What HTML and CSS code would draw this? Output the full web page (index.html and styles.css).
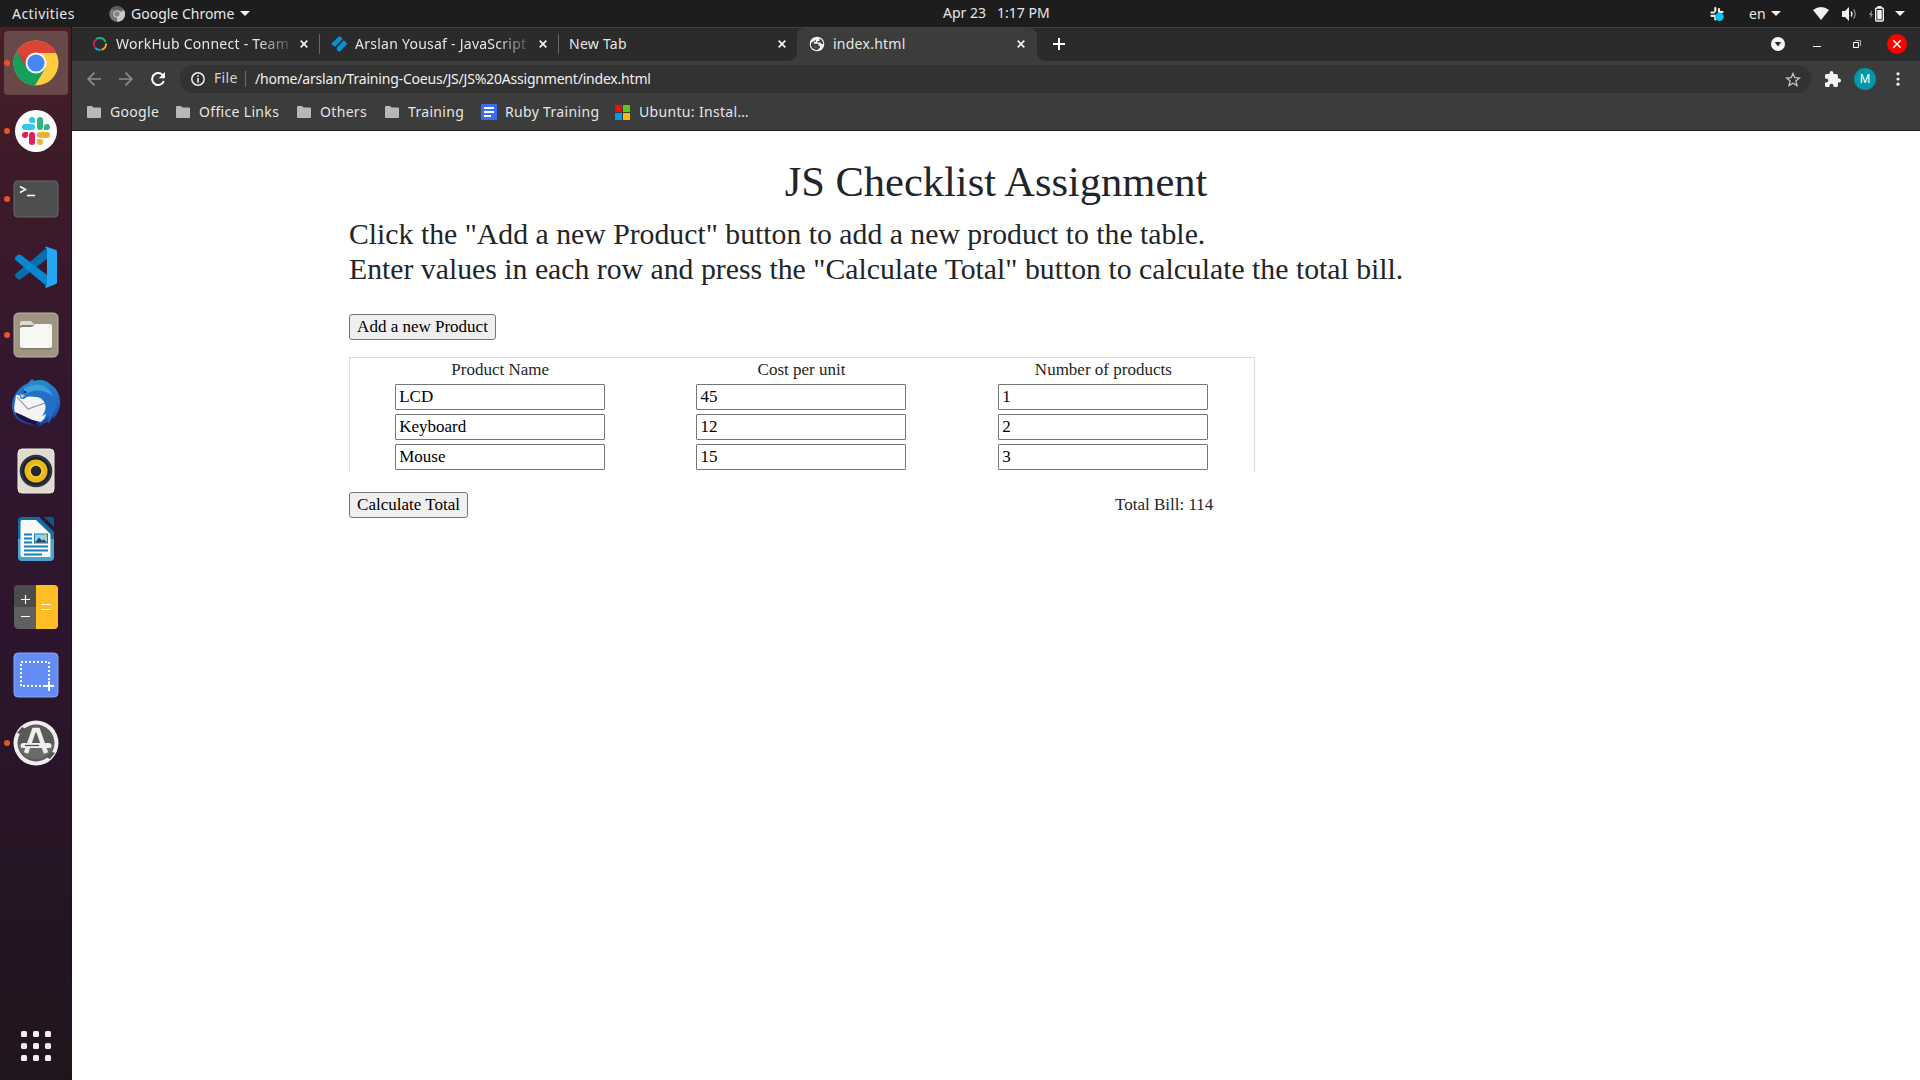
FILE: index.html
```html
<!DOCTYPE html>
<html lang="en">
<head>
<meta charset="utf-8">
<title>index.html</title>
<link rel="stylesheet" href="styles.css">
</head>
<body>
<header class="topbar">
  <span class="activities">Activities</span>
  <svg class="app-icon" width="16" height="16" viewBox="0 0 16 16"><circle cx="8" cy="8" r="7.7" fill="#777"/><path d="M8 8L15 4A7.7 7.7 0 0 1 8 15.7Z" fill="#c8c8c8"/><path d="M8 4H15A8 8 0 0 0 2 3Z" fill="#5d5d5d"/><circle cx="8" cy="8" r="3.6" fill="#ddd"/><circle cx="8" cy="8" r="2.7" fill="#858585"/></svg>
  <span class="app-name">Google Chrome</span>
  <i class="caret"></i>
  <div class="clock"><span>Apr 23</span><span>1:17 PM</span></div>
  <div class="tray">
    <svg class="tray-slack" width="16" height="16" viewBox="0 0 16 16"><g stroke="#eee" stroke-width="2.2" stroke-linecap="round"><path d="M6.300 2v3M10 3v3M2.500 6.500H5M10.500 6H13.500M2.500 9.800H6M6.300 10v3.500"/></g><circle cx="10.500" cy="10.700" r="4.300" fill="#00c8f0"/></svg>
    <span class="lang">en</span>
    <i class="caret caret-lang"></i>
    <svg class="wifi" width="16" height="13" viewBox="0 0 16 13"><path d="M0 3Q8-3 16 3L8 13Z" fill="#f2f2f2"/></svg>
    <svg class="volume" width="15" height="14" viewBox="0 0 15 14"><path d="M0 4h3l4-4v14l-4-4H0Z" fill="#f2f2f2"/><path d="M9 4.500q2 2.500 0 5" fill="none" stroke="#eee" stroke-width="1.300"/><path d="M11.500 2.500q3.500 4.500 0 9" fill="none" stroke="#888" stroke-width="1.300"/></svg>
    <svg class="battery" width="16" height="16" viewBox="0 0 16 16"><path d="M3 4L0 9h2l-1 4 3-5H2.500Z" fill="#999"/><path d="M8.500 0h4v2h-4z" fill="#f2f2f2"/><rect x="6.700" y="2" width="7.600" height="13" rx="1" fill="none" stroke="#f2f2f2" stroke-width="1.400"/><path d="M8.300 4h4.400v9.400H8.300z" fill="#f2f2f2"/></svg>
    <i class="caret caret-sys"></i>
  </div>
</header>
<div class="desktop">
  <nav class="dock">
    <div class="launcher active running"><svg width="46" height="46" viewBox="0 0 46 46"><circle cx="23" cy="23" r="22.500" fill="#ffce40"/><path d="M23 23L3.500 11.800A22.500 22.500 0 0 0 22 45.500L32.500 28Z" fill="#149f5b"/><path d="M23 13H43.200A22.500 22.500 0 0 0 3.800 11.300L13.500 28Z" fill="#dc4437"/><path d="M4.500 13l9 15v-9z" fill="#b93a30" opacity=".5"/><circle cx="23" cy="23" r="10.500" fill="#f3f3f3"/><circle cx="23" cy="23" r="8.600" fill="#4587f5"/></svg></div>
    <div class="launcher running"><svg width="42" height="42" viewBox="0 0 42 42"><circle cx="21" cy="21" r="21" fill="#fff"/><g fill="#36c5f0"><rect x="7" y="14" width="13" height="6" rx="3"/><path d="M20 13h-3a3 3 0 1 1 3-3z"/></g><g fill="#2eb67d"><rect x="22" y="7" width="6" height="13" rx="3"/><path d="M29 20v-3a3 3 0 1 1 3 3z"/></g><g fill="#ecb22e"><rect x="22" y="22" width="13" height="6" rx="3"/><path d="M22 29h3a3 3 0 1 1-3 3z"/></g><g fill="#e01e5a"><rect x="14" y="22" width="6" height="13" rx="3"/><path d="M13 22v3a3 3 0 1 1-3-3z"/></g></svg></div>
    <div class="launcher running"><svg width="46" height="38" viewBox="0 0 46 38"><rect x="1" y="1" width="44" height="36" rx="3.500" fill="#4e4e4e" stroke="#6a6a6a"/><path d="M7 6.500l5.500 3L7 12.500" fill="none" stroke="#fff" stroke-width="1.600"/><path d="M14 15.500h8" stroke="#fff" stroke-width="1.600"/></svg></div>
    <div class="launcher"><svg width="44" height="44" viewBox="0 0 44 44"><path d="M1.500 29Q0 30.500 1.500 32L4 34.200Q5.500 35 7 34L33 14V2.500Z" fill="#0a6cb0"/><path d="M1.500 15Q0 13.500 1.500 12L4 9.800Q5.500 9 7 10L33 30V41.500Z" fill="#0688d2"/><path d="M32 1.500L42 5q1 .5 1 2V37q0 1.500-1 2L32 43 31 41.500 33 40V4L31 2.500Z" fill="#27a4f2"/></svg></div>
    <div class="launcher running"><svg width="46" height="46" viewBox="0 0 46 46"><rect x="1" y="1" width="44" height="44" rx="4.500" fill="#9d9581" stroke="#bcb6a7"/><path d="M7 36V11q0-2 2-2h9l4 4h14q3 0 3 3z" fill="#dedacc"/><rect x="7" y="13" width="32" height="24.500" rx="2" fill="#837b69"/><path d="M7 17q0-2 2-2h9q2 0 4-3h15q2 0 2 2v20q0 2-2 2H9q-2 0-2-2z" fill="#f7f7f5"/></svg></div>
    <div class="launcher"><svg width="50" height="50" viewBox="0 0 50 50"><defs><linearGradient id="bird" x1="0" y1="0" x2="0" y2="1"><stop offset="0" stop-color="#248dcf"/><stop offset=".5" stop-color="#2366c5"/><stop offset="1" stop-color="#1a3f9a"/></linearGradient></defs><path d="M17 5l4-4 2 2Q33 0 39 6q11 7 10 20-1 9-6 14l-1-1-4 7-2-2-9 5 2-4-6 2Q8 46 3 37-1 29 2 21 6 10 17 5Z" fill="url(#bird)"/><path d="M3 30L5 17l30 3 1 18-6 6Q15 41 4 35Z" fill="#f3f4f5"/><path d="M6 19l11 12 17-6" fill="none" stroke="#8e959c" stroke-width="1.100"/><path d="M4 34l9 4 8 4 6 2-3 3-9-3Q6 41 4 34Z" fill="#211144"/><path d="M10 21Q7 17 11 11q6-6 15-3 12-2 18 10 4 12-5 23l-2 3 1-6-5 4 2-6-4 2q5-7 3-12-3-8-12-8-7 0-9 3z" fill="#2370c6"/><path d="M13 10q12-6 20-2 6 3 9 10-11-7-20-5l-9 3z" fill="#3c9fda"/><path d="M9 16l5 1-3 4z" fill="#bcc5cb"/><circle cx="14" cy="14" r="1.300" fill="#102764"/></svg></div>
    <div class="launcher"><svg width="38" height="46" viewBox="0 0 38 46"><rect x="1" y="1" width="36" height="44" rx="4" fill="#dfdccf" stroke="#eeece4"/><circle cx="19" cy="23" r="16.300" fill="#30343c"/><circle cx="19" cy="23" r="13.800" fill="#192031"/><circle cx="19" cy="23" r="11.500" fill="#ebb915"/><circle cx="19" cy="23" r="7" fill="#f6cb35"/><circle cx="19" cy="23" r="5.200" fill="#24272a"/></svg></div>
    <div class="launcher"><svg width="38" height="46" viewBox="0 0 38 46"><path d="M5 1H22L37 16V40q0 5-5 5H5q-4 0-4-4V5q0-4 4-4Z" fill="#0b70a7"/><path d="M1 23H37V41q0 4-4 4H5q-4 0-4-4z" fill="#4aa3cf"/><path d="M27 1h8q2 0 2 2v8z" fill="#075b8e"/><path d="M5 4H19L33.500 18V41H5Q3.500 41 3.500 39V6Q3.500 4 5 4Z" fill="#fafafa"/><path d="M7 18.500h8M7 22.500h8M7 26.500h8M7 30.500h24M7 34.500h24M7 38.500h18" stroke="#137eb5" stroke-width="2"/><rect x="17" y="17.500" width="14" height="10" fill="#137eb5"/><rect x="18" y="18.500" width="12" height="8" fill="#8ed4f2"/><path d="M18 26.500l4-5 3 3 2-1 3 3z" fill="#3b4147"/><path d="M27 18.500h3v3z" fill="#f6b52c"/></svg></div>
    <div class="launcher"><svg width="46" height="46" viewBox="0 0 46 46"><rect x="1" y="1" width="44" height="44" rx="4.500" fill="#606060"/><path d="M5 1h18v22H1V5q0-4 4-4z" fill="#4c4c4c"/><path d="M23 1h18q4 0 4 4v36q0 4-4 4H23z" fill="#ffbd25"/><path d="M8 15.500h9M12.500 11v9M8 32.500h9M28 20.500h10M28 25.500h10" stroke="#fff" stroke-width="1.100"/></svg></div>
    <div class="launcher"><svg width="46" height="46" viewBox="0 0 46 46"><rect x="1" y="1" width="44" height="44" rx="4" fill="#648cf5" stroke="#85a5f8"/><rect x="8" y="10" width="28" height="24" fill="none" stroke="#fff" stroke-width="2" stroke-dasharray="2 2"/><path d="M31 34h10M36 29v10" stroke="#fff" stroke-width="2"/></svg></div>
    <div class="launcher running"><svg width="46" height="46" viewBox="0 0 46 46"><circle cx="23" cy="23" r="22.500" fill="#eee"/><circle cx="23" cy="23" r="18.500" fill="#5a5a5a"/><path d="M5 25h36a18.500 18.500 0 0 1-36 0z" fill="#6b6b6b"/><path d="M4 13l5-6 4 2-6 5zM42 33l-5 6-4-2 6-5z" fill="#555"/><path d="M13 33L21 10h4l8 23" fill="none" stroke="#eee" stroke-width="4.500"/><path d="M10 25.500h26" stroke="#eee" stroke-width="5" stroke-linecap="round"/><path d="M12 25.500h14" stroke="#7a2c6b" stroke-width="1.200"/></svg></div>
    <div class="apps"><i></i><i></i><i></i><i></i><i></i><i></i><i></i><i></i><i></i></div>
  </nav>
  <main class="browser">
    <div class="tabstrip">
      <div class="tab"><svg class="favicon" width="16" height="16" viewBox="0 0 16 16"><g fill="none" stroke-width="2"><path d="M4 3.200A6 6 0 0 1 8 2" stroke="#19b37b"/><path d="M8 2a6 6 0 0 1 5.500 4" stroke="#18b184"/><path d="M14 7.500A6 6 0 0 1 9.500 13.800" stroke="#efad26"/><path d="M8.500 14A6 6 0 0 1 3 11.500" stroke="#1eaed8"/><path d="M2.500 10.500A6 6 0 0 1 4 3.500" stroke="#d51c5a"/></g></svg><span class="tab-title fade">WorkHub Connect - Team</span><svg class="close" viewBox="0 0 8 8"><path d="M.7.7l6.600 6.600M7.300.7L.7 7.300"/></svg></div>
      <div class="tab"><svg class="favicon" width="16" height="16" viewBox="0 0 16 16"><g fill="#0a91d6"><path d="M8 .500Q9.500 0 10.500 1.500L11.500 3 4.500 10.500Q2 10.500 .300 7.500Z"/><path d="M12.500 4.500Q15 5 16 8L9 15.500Q6.500 16 5.500 12Z"/></g></svg><span class="tab-title fade">Arslan Yousaf - JavaScript</span><svg class="close" viewBox="0 0 8 8"><path d="M.7.7l6.600 6.600M7.300.7L.7 7.300"/></svg></div>
      <div class="tab plain"><span class="tab-title">New Tab</span><svg class="close" viewBox="0 0 8 8"><path d="M.7.7l6.600 6.600M7.300.7L.7 7.300"/></svg></div>
      <div class="tab current"><svg class="favicon" width="16" height="16" viewBox="0 0 16 16"><circle cx="8" cy="8" r="7.300" fill="#f5f5f5"/><path d="M10 2.300L7 4v1.800H5v2h4.500V10H11v1.500L8.500 14H7.800V12L5.800 10V9L2.200 6.800 1.800 9Q2.500 13 7 14l.8-.3V12.300L5.800 10.500V9.300L2.500 6.500M10.500 3v2h-2v1.500h3L13 8h1.300Q14 4 10.500 2.500" fill="#3c3c3c"/></svg><span class="tab-title">index.html</span><svg class="close" viewBox="0 0 8 8"><path d="M.7.7l6.600 6.600M7.300.7L.7 7.300"/></svg></div>
      <svg class="newtab" width="12" height="12" viewBox="0 0 12 12"><path d="M6 0v12M0 6h12" stroke="#fff" stroke-width="2"/></svg>
      <div class="window-controls">
        <svg width="14" height="14" viewBox="0 0 14 14"><circle cx="7" cy="7" r="7" fill="#f8f8f8"/><path d="M3.700 5h6.600L7 9.500z" fill="#2b2b2b"/></svg>
        <svg width="8" height="8" viewBox="0 0 8 8"><path d="M0 6.500h8" stroke="#fff"/></svg>
        <svg width="8" height="8" viewBox="0 0 8 8"><path d="M.5 2.500h5v5h-5z" fill="none" stroke="#fff"/><path d="M2.500 .5h5V6" fill="none" stroke="#aaa"/></svg>
        <svg width="20" height="20" viewBox="0 0 20 20"><circle cx="10" cy="10" r="10" fill="#f90400"/><path d="M6.300 6.300l7.400 7.400M13.700 6.300l-7.400 7.400" stroke="#fff" stroke-width="1.500"/></svg>
      </div>
    </div>
    <div class="toolbar">
      <svg class="nav-icon" width="14" height="14" viewBox="0 0 14 14"><path d="M14 7H1.500M7.500 .7L1.200 7l6.300 6.300" fill="none" stroke="#8d8d8d" stroke-width="1.700"/></svg>
      <svg class="nav-icon" width="14" height="14" viewBox="0 0 14 14"><path d="M0 7h12.500M6.500 .7L12.800 7l-6.300 6.300" fill="none" stroke="#8d8d8d" stroke-width="1.700"/></svg>
      <svg class="nav-icon" width="14" height="14" viewBox="0 0 14 14"><path d="M12 3.500A6 6 0 1 0 12.800 9" fill="none" stroke="#fff" stroke-width="2"/><path d="M14 0v6.200H7.800Z" fill="#fff"/></svg>
      <div class="omnibox">
        <svg width="14" height="14" viewBox="0 0 14 14"><circle cx="7" cy="7" r="6.200" fill="none" stroke="#eee" stroke-width="1.500"/><path d="M6.200 3.200h1.600v1.600H6.200zM6.200 6h1.600v4.800H6.200z" fill="#eee"/></svg>
        <span class="scheme">File</span><span class="url">/home/arslan/Training-Coeus/JS/JS%20Assignment/index.html</span>
        <svg class="star" width="16" height="15" viewBox="0 0 16 15"><path d="M8 1.500l1.800 4.200 4.600.4-3.500 3 1.100 4.500L8 11.200l-4 2.400 1.100-4.500-3.500-3 4.600-.4z" fill="none" stroke="#c4c4c4" stroke-width="1.300"/></svg>
      </div>
      <svg class="puzzle" width="16" height="16" viewBox="2 1 21 21"><path d="M20.500 11H19V7a2 2 0 0 0-2-2h-4V3.500a2.500 2.500 0 0 0-5 0V5H4a2 2 0 0 0-2 2v3.800h1.500a2.700 2.700 0 0 1 0 5.400H2V20a2 2 0 0 0 2 2h3.800v-1.500a2.700 2.700 0 0 1 5.400 0V22H17a2 2 0 0 0 2-2v-4h1.500a2.500 2.500 0 0 0 0-5Z" fill="#f3f3f3"/></svg>
      <span class="avatar">M</span>
      <svg class="menu" width="4" height="14" viewBox="0 0 4 14"><g fill="#eee"><circle cx="2" cy="1.800" r="1.600"/><circle cx="2" cy="7" r="1.600"/><circle cx="2" cy="12.200" r="1.600"/></g></svg>
    </div>
    <div class="bookmarks">
      <div class="bookmark b1"><svg width="14" height="12" viewBox="0 0 14 12"><path d="M0 1q0-1 1-1h4l1.500 1.500H13q1 0 1 1V11q0 1-1 1H1q-1 0-1-1z"/></svg><span>Google</span></div>
      <div class="bookmark b2"><svg width="14" height="12" viewBox="0 0 14 12"><path d="M0 1q0-1 1-1h4l1.500 1.500H13q1 0 1 1V11q0 1-1 1H1q-1 0-1-1z"/></svg><span>Office Links</span></div>
      <div class="bookmark b3"><svg width="14" height="12" viewBox="0 0 14 12"><path d="M0 1q0-1 1-1h4l1.500 1.500H13q1 0 1 1V11q0 1-1 1H1q-1 0-1-1z"/></svg><span>Others</span></div>
      <div class="bookmark b4"><svg width="14" height="12" viewBox="0 0 14 12"><path d="M0 1q0-1 1-1h4l1.500 1.500H13q1 0 1 1V11q0 1-1 1H1q-1 0-1-1z"/></svg><span>Training</span></div>
      <div class="bookmark b5"><svg width="16" height="16" viewBox="0 0 16 16"><rect width="16" height="16" rx="1" fill="#3d6bf5"/><path d="M3 4h10M3 8h10M3 12h7" stroke="#fff" stroke-width="1.800"/></svg><span>Ruby Training</span></div>
      <div class="bookmark b6"><svg width="15" height="15" viewBox="0 0 15 15"><path d="M0 0h7v7H0z" fill="#f80b00"/><path d="M8 0h7v7H8z" fill="#55cc1a"/><path d="M0 8h7v7H0z" fill="#0099f8"/><path d="M8 8h7v7H8z" fill="#ffba00"/></svg><span>Ubuntu: Instal…</span></div>
    </div>
    <section class="page">
      <h1>JS Checklist Assignment</h1>
      <div class="content">
        <h3>Click the "Add a new Product" button to add a new product to the table.<br>Enter values in each row and press the "Calculate Total" button to calculate the total bill.</h3>
        <button class="add">Add a new Product</button>
        <table class="products">
          <tr><td>Product Name</td><td>Cost per unit</td><td>Number of products</td></tr>
          <tr><td><input value="LCD"></td><td><input value="45"></td><td><input value="1"></td></tr>
          <tr><td><input value="Keyboard"></td><td><input value="12"></td><td><input value="2"></td></tr>
          <tr><td><input value="Mouse"></td><td><input value="15"></td><td><input value="3"></td></tr>
        </table>
        <div class="summary"><button class="calc">Calculate Total</button><span>Total Bill: 114</span></div>
      </div>
    </section>
  </main>
</div>
</body>
</html>
```
FILE: styles.css
```css
* { box-sizing: border-box; }
body { margin: 0; width: 1920px; height: 1080px; overflow: hidden; display: flex; flex-direction: column; font-family: "Noto Sans", sans-serif; font-size: 14px; white-space: nowrap; }
svg { display: block; flex: none; }

.topbar { position: relative; height: 27px; flex: none; display: flex; align-items: center; padding-left: 12px; background: #1d1d1d; color: #e8e8e8; }
.activities { width: 97px; letter-spacing: .45px; }
.app-name { margin-left: 6px; width: 104px; }
.caret { border: 5px solid transparent; border-top-color: #f2f2f2; border-bottom: 0; margin-left: 5px; }
.clock { position: absolute; left: 943px; top: 3px; display: flex; gap: 11px; }
.tray { margin-left: auto; padding-right: 15px; display: flex; align-items: center; }
.lang { margin-left: 24px; width: 17px; }
.wifi { margin-left: 32px; }
.volume { margin-left: 13px; }
.battery { margin-left: 12px; }
.caret-sys { margin-left: 10px; }

.desktop { flex: 1; display: flex; min-height: 0; }
.dock { width: 72px; flex: none; padding-top: 4px; display: flex; flex-direction: column; align-items: center; gap: 4px; background: linear-gradient(#482025 0, #3e1b29 12%, #32172f 36%, #2a152b 66%, #21151d 100%); box-shadow: inset -1px 0 #1c1518; }
.launcher { position: relative; width: 64px; height: 64px; flex: none; display: flex; align-items: center; justify-content: center; border-radius: 4px; }
.active { background: #684849; }
.running::before { content: ""; position: absolute; left: 0; top: 29px; width: 6px; height: 6px; border-radius: 50%; background: #e95420; }
.apps { margin: auto 0 19px; display: grid; grid-template-columns: repeat(3, 6px); gap: 6px; }
.apps i { height: 6px; border-radius: 1.5px; background: #f2eff1; }

.browser { flex: 1; min-width: 0; display: flex; flex-direction: column; background: #fff; }
.tabstrip { height: 34px; flex: none; display: flex; align-items: center; background: #2b2b2b; border-top: 1px solid #424242; padding-left: 8px; color: #e6e6e6; }
.tab { position: relative; width: 239px; height: 33px; flex: none; display: flex; align-items: center; padding: 0 11px 1px 12px; }
.tab + .tab:not(.current)::before { content: ""; position: absolute; left: 0; top: 6px; width: 1px; height: 20px; background: #676767; }
.plain { padding-left: 11px; }
.tab-title { flex: 1; margin-left: 8px; overflow: hidden; letter-spacing: .25px; line-height: 20px; padding-bottom: 1px; }
.plain .tab-title { margin-left: 0; }
.fade { margin-right: 8px; -webkit-mask-image: linear-gradient(90deg, #000 142px, rgba(0,0,0,.1) 176px); mask-image: linear-gradient(90deg, #000 142px, rgba(0,0,0,.1) 176px); }
.close { width: 8px; height: 8px; fill: none; stroke: #f2f2f2; stroke-width: 1.7; }
.current { background: #3c3c3c; border-radius: 8px 8px 0 0; width: 240px; padding-right: 12px; }
.current::before, .current::after { content: ""; position: absolute; bottom: 0; width: 8px; height: 8px; }
.current::before { left: -8px; background: radial-gradient(circle at 0 0, transparent 7.5px, #3c3c3c 8px); }
.current::after { right: -8px; background: radial-gradient(circle at 100% 0, transparent 7.5px, #3c3c3c 8px); }
.newtab { margin: 0 0 1px 16px; }
.window-controls { margin-left: auto; padding: 0 13px 1px 0; display: flex; align-items: center; }
.window-controls svg:nth-child(2) { margin-left: 28px; }
.window-controls svg:nth-child(3) { margin-left: 32px; }
.window-controls svg:nth-child(4) { margin-left: 26px; }

.toolbar { height: 36px; flex: none; display: flex; align-items: center; padding: 0 20px 0 15px; background: #3c3c3c; }
.nav-icon { margin-right: 18px; }
.omnibox { height: 28px; width: 1632px; margin-left: -3px; border-radius: 14px; background: #323232; display: flex; align-items: center; padding: 0 10px 0 11px; color: #f0f0f0; }
.scheme { margin-left: 9px; width: 32px; height: 16px; line-height: 14px; border-right: 1px solid #6c6c6c; color: #d5d5d5; letter-spacing: .3px; }
.url { margin-left: 9px; letter-spacing: -.2px; padding-bottom: 1px; }
.star { margin-left: auto; }
.puzzle { margin-left: 14px; }
.avatar { margin-left: 13px; width: 22px; height: 22px; border-radius: 50%; background: #0097a7; color: #fff; font: 12px/22px Roboto, sans-serif; text-align: center; }
.menu { margin-left: 20px; }

.bookmarks { height: 34px; flex: none; display: flex; align-items: center; padding: 0 0 3px 15px; background: #3c3c3c; border-bottom: 1px solid #1f1f1f; color: #e6e6e6; letter-spacing: .33px; }
.bookmark { display: flex; align-items: center; gap: 9px; fill: #b8b8b8; flex: none; }
.bookmark span { padding-bottom: 1px; }
.b1 { width: 89px; } .b2 { width: 121px; } .b3 { width: 88px; } .b4 { width: 96px; } .b5 { width: 134px; gap: 8px; }

.page { flex: 1; padding-top: 25px; font-family: "Liberation Serif", serif; font-size: 17px; color: #212529; }
h1, h3 { margin: 0; font-weight: 400; line-height: 1.2; }
h1 { font-size: 42.5px; text-align: center; line-height: 51px; }
.content { margin-left: 277px; width: 1200px; }
h3 { margin-top: 9px; font-size: 29.75px; line-height: 35px; }
button, input { font: 17px/20px "Liberation Serif", serif; color: #000; height: 26px; }
button { display: block; border: 1px solid #767676; border-radius: 3px; background: #efefef; padding: 0; }
.add { width: 147px; margin-top: 28px; }
.calc { width: 119px; }
.products { width: 906px; margin-top: 17px; table-layout: fixed; border-collapse: separate; border-spacing: 0; border: 1px solid #dcdcdc; border-bottom: 0; text-align: center; }
td { padding: 0; height: 30px; }
td:not(:last-child) { padding-right: 1px; }
tr:first-child td { height: 24px; line-height: 24px; }
input { display: block; margin: 0 auto; width: 210px; border: 1px solid #767676; border-radius: 1px; padding: 1px 3px; background: #fff; }
.summary { margin-top: 20px; display: flex; align-items: center; }
.summary span { margin-left: 647px; }
```
